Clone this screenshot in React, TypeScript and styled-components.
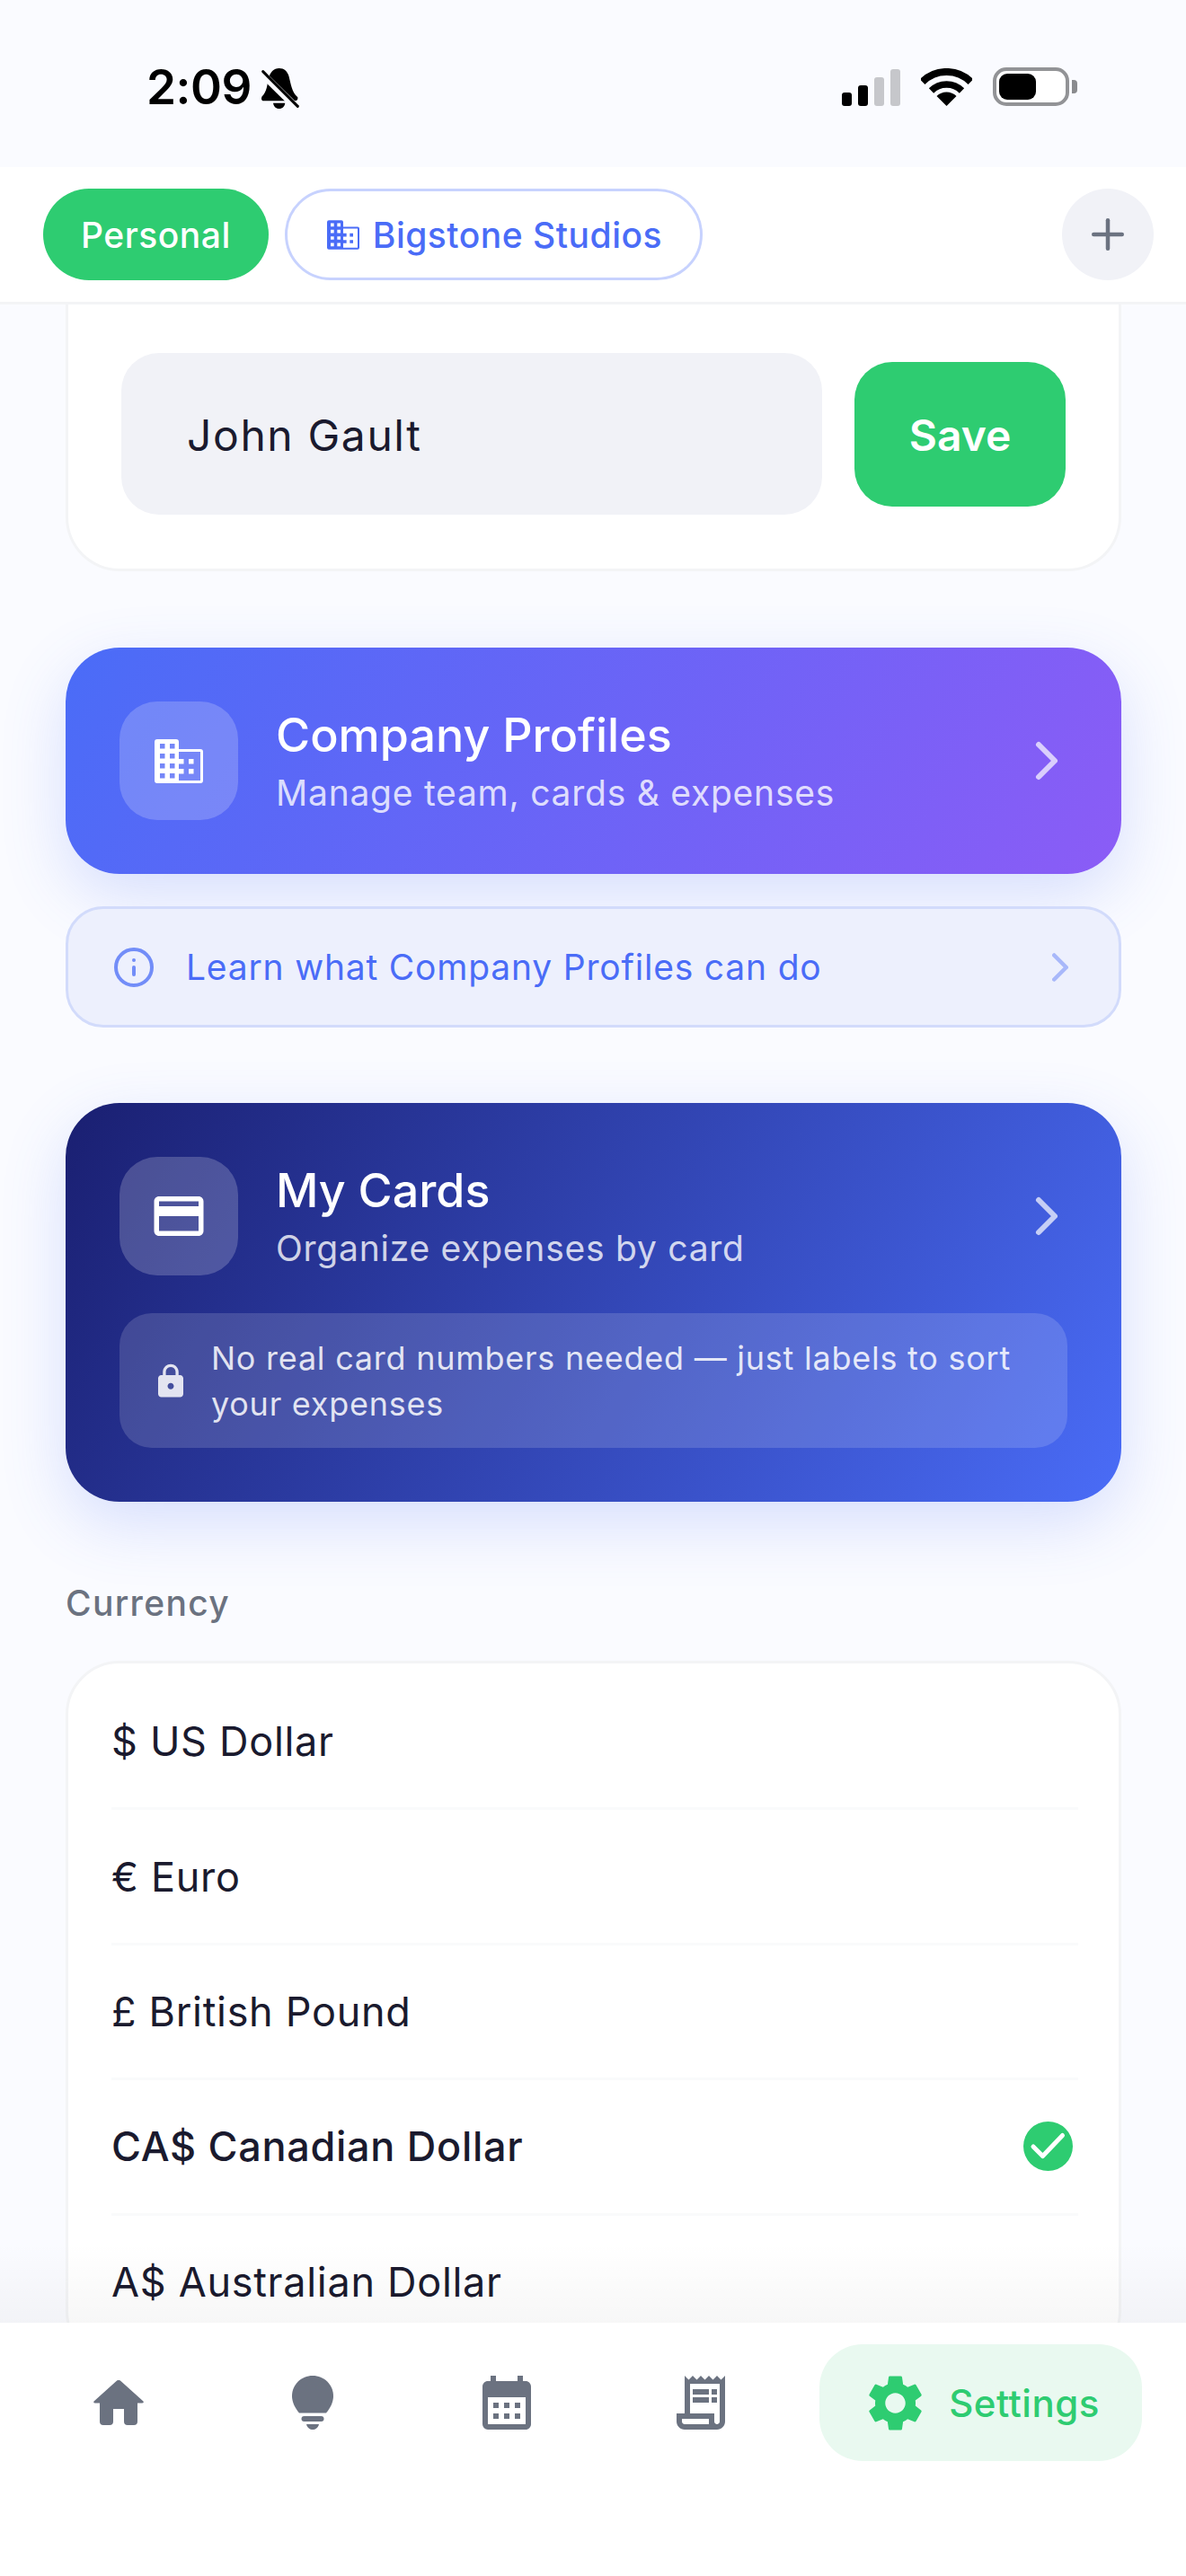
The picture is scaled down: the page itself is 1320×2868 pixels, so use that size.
import React from "react";
import styled, { createGlobalStyle } from "styled-components";
import { ChevronRight, Info, Plus } from "lucide-react";
import {
  MdCalendarMonth,
  MdLock,
  MdOutlineCreditCard,
  MdOutlineReceiptLong,
  MdSettings,
} from "react-icons/md";

const GlobalStyle = createGlobalStyle`
  html, body { margin: 0; padding: 0; background: #fafbff; }
  body { font-family: Inter, "Liberation Sans", sans-serif; -webkit-font-smoothing: antialiased; }
  * { box-sizing: border-box; }
`;

const Screen = styled.div`
  width: 1320px;
  height: 2868px;
  display: flex;
  flex-direction: column;
  overflow: hidden;
  background: #fafbff;
  position: relative;
`;

const StatusBar = styled.div`
  height: 186px;
  flex: none;
  display: flex;
  justify-content: space-between;
  align-items: flex-start;
  padding: 75px 121px 0 163px;
`;
const StatusLeft = styled.div`
  display: flex;
  align-items: flex-start;
  gap: 10px;
`;
const Time = styled.span`
  font-size: 53px;
  line-height: 45px;
  font-weight: 600;
  color: #000;
  letter-spacing: -0.5px;
`;
const StatusRight = styled.div`
  display: flex;
  align-items: flex-end;
  height: 43px;
  gap: 23px;
`;
const Signal = styled.div`
  display: flex;
  align-items: flex-end;
  gap: 7px;
`;
const SignalBar = styled.div<{ $h: number; $on: boolean }>`
  width: 11px;
  height: ${(p) => p.$h}px;
  border-radius: 3px;
  background: ${(p) => (p.$on ? "#000" : "#c6c7cb")};
`;
const Battery = styled.div`
  display: flex;
  align-items: center;
  gap: 3px;
`;
const BatteryShell = styled.div`
  width: 85px;
  height: 43px;
  border: 4px solid #929396;
  border-radius: 15px;
  padding: 3px;
  background: #fff;
`;
const BatteryFill = styled.div`
  width: 41px;
  height: 100%;
  background: #000;
  border-radius: 9px;
`;
const BatteryNub = styled.div`
  width: 6px;
  height: 15px;
  background: #8a8b8e;
  border-radius: 0 4px 4px 0;
`;

const TabBar = styled.div`
  height: 153px;
  flex: none;
  background: #fff;
  border-bottom: 3px solid #f3f4f6;
  display: flex;
  align-items: center;
  padding: 0 36px 0 48px;
`;
const PersonalTab = styled.div`
  height: 102px;
  padding: 0 42px;
  border-radius: 51px;
  background: #2ecc71;
  color: #fff;
  font-size: 39px;
  letter-spacing: 0.5px;
  font-weight: 500;
  display: flex;
  align-items: center;
`;
const CompanyTab = styled.div`
  height: 102px;
  margin-left: 18px;
  padding: 0 42px 0 44px;
  border-radius: 51px;
  border: 3px solid #c7d2fe;
  background: #fff;
  color: #4a6cf7;
  font-size: 39px;
  letter-spacing: 0.5px;
  font-weight: 500;
  display: flex;
  align-items: center;
  gap: 15px;
`;
const AddButton = styled.div`
  width: 102px;
  height: 102px;
  margin-left: auto;
  border-radius: 50%;
  background: #f1f2f7;
  color: #6b7280;
  display: flex;
  align-items: center;
  justify-content: center;
`;

const Content = styled.div`
  flex: 1;
  min-height: 0;
  overflow: hidden;
  padding: 0 72px 0 73px;
  display: flex;
  flex-direction: column;
`;
const NameCard = styled.div`
  flex: none;
  background: #fff;
  border: 3px solid #f3f4f6;
  border-top: 0;
  border-radius: 0 0 60px 60px;
  padding: 54px 59px 60px 59px;
  display: flex;
  align-items: center;
  gap: 36px;
`;
const NameInput = styled.div`
  flex: 1;
  height: 180px;
  border-radius: 42px;
  background: #f1f2f7;
  color: #1a1a2e;
  font-size: 48px;
  letter-spacing: 1.6px;
  padding: 2px 73px 0;
  display: flex;
  align-items: center;
`;
const SaveButton = styled.div`
  width: 235px;
  height: 161px;
  border-radius: 42px;
  background: #2ecc71;
  color: #fff;
  font-size: 48px;
  font-weight: 600;
  padding-top: 2px;
  display: flex;
  align-items: center;
  justify-content: center;
`;
const GradientCard = styled.div<{ $from: string; $to: string; $mt: number }>`
  flex: none;
  margin-top: ${(p) => p.$mt}px;
  border-radius: 60px;
  padding: 60px;
  background: linear-gradient(120deg, ${(p) => p.$from}, ${(p) => p.$to});
  box-shadow: 0 24px 72px rgba(74, 108, 247, 0.2);
  color: #fff;
`;
const CardHead = styled.div`
  display: flex;
  align-items: center;
`;
const IconBox = styled.div`
  width: 132px;
  height: 132px;
  flex: none;
  border-radius: 42px;
  background: rgba(255, 255, 255, 0.2);
  display: flex;
  align-items: center;
  justify-content: center;
`;
const CardText = styled.div`
  flex: 1;
  margin-left: 42px;
  display: flex;
  flex-direction: column;
  gap: 9px;
`;
const CardTitle = styled.div`
  font-size: 52px;
  line-height: 62px;
  font-weight: 500;
`;
const CardSub = styled.div`
  font-size: 39px;
  line-height: 48px;
  letter-spacing: 0.75px;
  color: rgba(255, 255, 255, 0.8);
`;
const CardChevron = styled(ChevronRight)`
  flex: none;
  color: rgba(255, 255, 255, 0.7);
  margin-right: -13px;
`;
const LearnBar = styled.div`
  flex: none;
  margin-top: 36px;
  height: 135px;
  border-radius: 42px;
  border: 3px solid #d2dbfb;
  background: #edf0fd;
  color: #4a6cf7;
  display: flex;
  align-items: center;
  padding: 0 38px 0 49px;
  font-size: 39px;
  letter-spacing: 0.8px;
`;
const LearnText = styled.span`
  flex: 1;
  margin-left: 34px;
`;
const LearnInfo = styled(Info)`
  opacity: 0.75;
`;
const LearnChevron = styled(ChevronRight)`
  opacity: 0.42;
`;
const Note = styled.div`
  margin-top: 42px;
  height: 150px;
  border-radius: 36px;
  background: rgba(255, 255, 255, 0.15);
  display: flex;
  align-items: center;
  padding: 2px 60px 0 36px;
  gap: 24px;
  font-size: 36px;
  line-height: 51px;
  letter-spacing: 0.75px;
  color: rgba(255, 255, 255, 0.85);
`;
const NoteLock = styled(MdLock)`
  flex: none;
`;
const SectionLabel = styled.div`
  flex: none;
  margin-top: 89px;
  margin-bottom: 40px;
  font-size: 39px;
  line-height: 48px;
  font-weight: 500;
  letter-spacing: 1.3px;
  color: #6b7280;
`;
const ListCard = styled.div`
  flex: none;
  background: #fff;
  border: 3px solid #f3f4f6;
  border-radius: 60px;
  padding: 13px 45px 13px 48px;
`;
const Row = styled.div<{ $selected?: boolean }>`
  height: 150.4px;
  display: flex;
  align-items: center;
  justify-content: space-between;
  border-bottom: 3px solid #f9fafb;
  color: #1a1a2e;
  font-size: 45px;
  letter-spacing: 0.7px;
  font-weight: ${(p) => (p.$selected ? 500 : 400)};
`;
const BadgeSvg = styled.svg`
  margin-right: 6px;
`;

const BottomFade = styled.div`
  position: absolute;
  left: 0;
  right: 0;
  bottom: 282px;
  height: 90px;
  background: linear-gradient(to bottom, rgba(0, 0, 0, 0), rgba(0, 0, 0, 0.03));
  pointer-events: none;
`;
const Nav = styled.div`
  flex: none;
  height: 282px;
  background: #fff;
  display: flex;
  align-items: flex-start;
  padding: 24px 49px 0 24px;
  position: relative;
`;
const NavItem = styled.div`
  width: 216px;
  height: 130px;
  color: #6b7280;
  display: flex;
  align-items: center;
  justify-content: center;
`;
const NavActive = styled.div`
  margin-left: auto;
  width: 359px;
  height: 130px;
  border-radius: 48px;
  background: #e9f9f0;
  color: #2ecc71;
  display: flex;
  align-items: center;
  justify-content: center;
  gap: 22px;
  font-size: 42px;
  letter-spacing: 0.5px;
  font-weight: 500;
`;

const BuildingIcon = ({ w, h }: { w: number; h: number }) => {
  const windows: string[] = [];
  for (const x of [6, 17]) for (const y of [5, 16, 27, 38]) windows.push(`M${x} ${y}h5.5v5.5h-5.5z`);
  for (const x of [27, 38]) for (const y of [22, 33]) windows.push(`M${x} ${y}h5.5v5.5h-5.5z`);
  return (
    <svg width={w} height={h} viewBox="0 0 54 49" fill="currentColor">
      <path
        fillRule="evenodd"
        d={
          "M3 0H24a3 3 0 0 1 3 3V11H51a3 3 0 0 1 3 3V46a3 3 0 0 1-3 3H3a3 3 0 0 1-3-3V3a3 3 0 0 1 3-3Z M27 14H51V46H27Z " +
          windows.join(" ")
        }
      />
    </svg>
  );
};

const BellOff = () => (
  <svg width="44" height="46" viewBox="36 12 132 138" fill="#000">
    <path d="M98 15C115 15 125 25 130 40C138 70 140 95 160 112Q162 124 150 124H48Q36 124 40 110C58 92 58 70 62 50C68 28 80 15 98 15Z" />
    <path d="M78 131H118C116 145 106 150 98 150C90 150 80 145 78 131Z" />
    <path d="M30 22L170 160" stroke="#fafbff" strokeWidth="24" />
    <path d="M44 26L160 142" stroke="#000" strokeWidth="9" strokeLinecap="round" />
  </svg>
);

const Wifi = () => (
  <svg width="57" height="42" viewBox="0 0 57 42" fill="none" stroke="#000">
    <path d="M1.6 15.1A38 38 0 0 1 55.4 15.1" strokeWidth="8" />
    <path d="M11.5 25A24 24 0 0 1 45.5 25" strokeWidth="7.5" />
    <path d="M28.5 42L17.5 31A15.5 15.5 0 0 1 39.5 31Z" fill="#000" stroke="none" />
  </svg>
);

const HomeIcon = () => (
  <svg width="56" height="50" viewBox="0 0 56 50" fill="currentColor">
    <path d="M25.5 1a3.5 3.5 0 0 1 5 0L55.5 23.5Q56.5 25.5 54 25.5H49V46a4 4 0 0 1-4 4H38a4 4 0 0 1-4-4V32H22V46a4 4 0 0 1-4 4H11a4 4 0 0 1-4-4V25.5H2Q-.5 25.5.5 23.5Z" />
  </svg>
);

const BulbIcon = () => (
  <svg width="46" height="60" viewBox="0 0 46 60" fill="currentColor">
    <path d="M23 0C35.7 0 46 10 46 22.5C46 30 42.5 36 38 41.5H8C3.5 36 0 30 0 22.5C0 10 10.3 0 23 0Z" />
    <rect x="10.5" y="45" width="25" height="6" rx="3" />
    <path d="M16 54H30C29 58 26 60 23 60C20 60 17 58 16 54Z" />
  </svg>
);

const CheckBadge = () => (
  <BadgeSvg width="55" height="55" viewBox="0 0 55 55">
    <circle cx="27.5" cy="27.5" r="27.5" fill="#2ecc71" />
    <path d="M11 28L21.5 38.5L43.5 15.5" fill="none" stroke="#fff" strokeWidth="5" strokeLinecap="round" strokeLinejoin="round" />
  </BadgeSvg>
);

const currencies = [
  { label: "$ US Dollar" },
  { label: "€ Euro" },
  { label: "£ British Pound" },
  { label: "CA$ Canadian Dollar", selected: true },
  { label: "A$ Australian Dollar" },
];

export default function App() {
  return (
    <Screen>
      <GlobalStyle />
      <StatusBar>
        <StatusLeft>
          <Time>2:09</Time>
          <BellOff />
        </StatusLeft>
        <StatusRight>
          <Signal>
            <SignalBar $h={15} $on />
            <SignalBar $h={23} $on />
            <SignalBar $h={32} $on={false} />
            <SignalBar $h={41} $on={false} />
          </Signal>
          <Wifi />
          <Battery>
            <BatteryShell>
              <BatteryFill />
            </BatteryShell>
            <BatteryNub />
          </Battery>
        </StatusRight>
      </StatusBar>
      <TabBar>
        <PersonalTab>Personal</PersonalTab>
        <CompanyTab>
          <BuildingIcon w={36} h={33} />
          Bigstone Studios
        </CompanyTab>
        <AddButton>
          <Plus size={54} strokeWidth={2} />
        </AddButton>
      </TabBar>
      <Content>
        <NameCard>
          <NameInput>John Gault</NameInput>
          <SaveButton>Save</SaveButton>
        </NameCard>
        <GradientCard $from="#4a6cf7" $to="#8b5cf6" $mt={85}>
          <CardHead>
            <IconBox>
              <BuildingIcon w={54} h={49} />
            </IconBox>
            <CardText>
              <CardTitle>Company Profiles</CardTitle>
              <CardSub>Manage team, cards &amp; expenses</CardSub>
            </CardText>
            <CardChevron size={72} strokeWidth={2} />
          </CardHead>
        </GradientCard>
        <LearnBar>
          <LearnInfo size={48} strokeWidth={2} />
          <LearnText>Learn what Company Profiles can do</LearnText>
          <LearnChevron size={54} strokeWidth={2} />
        </LearnBar>
        <GradientCard $from="#1a1f71" $to="#4a6cf7" $mt={84}>
          <CardHead>
            <IconBox>
              <MdOutlineCreditCard size={66} />
            </IconBox>
            <CardText>
              <CardTitle>My Cards</CardTitle>
              <CardSub>Organize expenses by card</CardSub>
            </CardText>
            <CardChevron size={72} strokeWidth={2} />
          </CardHead>
          <Note>
            <NoteLock size={42} />
            <span>No real card numbers needed — just labels to sort your expenses</span>
          </Note>
        </GradientCard>
        <SectionLabel>Currency</SectionLabel>
        <ListCard>
          {currencies.map((c) => (
            <Row key={c.label} $selected={c.selected}>
              {c.label}
              {c.selected && <CheckBadge />}
            </Row>
          ))}
        </ListCard>
      </Content>
      <BottomFade />
      <Nav>
        <NavItem>
          <HomeIcon />
        </NavItem>
        <NavItem>
          <BulbIcon />
        </NavItem>
        <NavItem>
          <MdCalendarMonth size={72} />
        </NavItem>
        <NavItem>
          <MdOutlineReceiptLong size={72} />
        </NavItem>
        <NavActive>
          <MdSettings size={75} />
          Settings
        </NavActive>
      </Nav>
    </Screen>
  );
}
